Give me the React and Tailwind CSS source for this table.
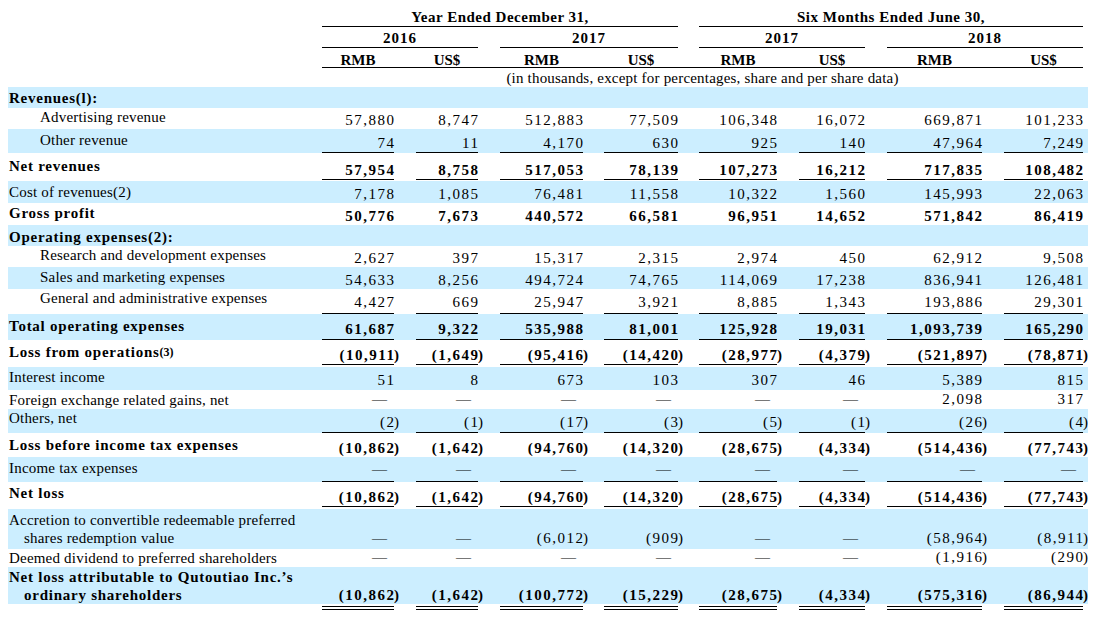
import { Fragment } from 'react';

const COLS =
  'grid grid-cols-[314px_72px_22px_62px_22px_83px_21px_74px_21px_78px_22px_66px_22px_95px_22px_79px_5px]';

const ROWS = [
  { label: 'Revenues(l):', b: true, bg: true, h: 'h-[21px]', lc: 'pl-[1px] pb-[1.5px]' },
  {
    label: 'Advertising revenue',
    h: 'h-[21px]',
    lc: 'pl-[32px] pb-[3.5px]',
    nc: 'pb-0',
    pc: 'pb-0',
    v: ['57,880', '8,747', '512,883', '77,509', '106,348', '16,072', '669,871', '101,233'],
  },
  {
    label: 'Other revenue',
    bg: true,
    h: 'h-[24px]',
    lc: 'pl-[32px] pb-[4.5px]',
    nc: 'pb-0 border-b border-black',
    pc: 'pb-[1px]',
    v: ['74', '11', '4,170', '630', '925', '140', '47,964', '7,249'],
  },
  {
    label: 'Net revenues',
    b: true,
    h: 'h-[28px]',
    lc: 'pl-[1px] pb-[6.5px]',
    nc: 'pb-[0.5px] border-b border-black mb-px',
    pc: 'pb-[2.5px]',
    v: ['57,954', '8,758', '517,053', '78,139', '107,273', '16,212', '717,835', '108,482'],
  },
  {
    label: 'Cost of revenues(2)',
    bg: true,
    h: 'h-[22px]',
    lc: 'pl-[1px] pb-[2.5px]',
    nc: 'pb-0',
    pc: 'pb-0',
    v: ['7,178', '1,085', '76,481', '11,558', '10,322', '1,560', '145,993', '22,063'],
  },
  {
    label: 'Gross profit',
    b: true,
    h: 'h-[22px]',
    lc: 'pl-[1px] pb-[3.5px]',
    nc: 'pb-0',
    pc: 'pb-0',
    v: ['50,776', '7,673', '440,572', '66,581', '96,951', '14,652', '571,842', '86,419'],
  },
  { label: 'Operating expenses(2):', b: true, bg: true, h: 'h-[21px]', lc: 'pl-[1px] pb-[0.5px]' },
  {
    label: 'Research and development expenses',
    h: 'h-[21px]',
    lc: 'pl-[32px] pb-[3.5px]',
    nc: 'pb-[0.5px]',
    pc: 'pb-[0.5px]',
    v: ['2,627', '397', '15,317', '2,315', '2,974', '450', '62,912', '9,508'],
  },
  {
    label: 'Sales and marketing expenses',
    bg: true,
    h: 'h-[22px]',
    lc: 'pl-[32px] pb-[3.5px]',
    nc: 'pb-[0.5px]',
    pc: 'pb-[0.5px]',
    v: ['54,633', '8,256', '494,724', '74,765', '114,069', '17,238', '836,941', '126,481'],
  },
  {
    label: 'General and administrative expenses',
    h: 'h-[25px]',
    lc: 'pl-[32px] pb-[7.5px]',
    nc: 'pb-[2.5px] border-b border-black',
    pc: 'pb-[3.5px]',
    v: ['4,427', '669', '25,947', '3,921', '8,885', '1,343', '193,886', '29,301'],
  },
  {
    label: 'Total operating expenses',
    b: true,
    bg: true,
    h: 'h-[26px]',
    lc: 'pl-[1px] pb-[5.5px]',
    nc: 'pb-[1.5px] border-b border-black',
    pc: 'pb-[2.5px]',
    v: ['61,687', '9,322', '535,988', '81,001', '125,928', '19,031', '1,093,739', '165,290'],
  },
  {
    label: (
      <>
        Loss from operations<span className="align-[4px] text-[12px] tracking-normal">(3)</span>
      </>
    ),
    b: true,
    h: 'h-[27px]',
    lc: 'pl-[1px] pb-[6.5px]',
    nc: 'pb-0 border-b border-black mb-[2px]',
    pc: 'pb-[3px]',
    v: ['(10,911)', '(1,649)', '(95,416)', '(14,420)', '(28,977)', '(4,379)', '(521,897)', '(78,871)'],
  },
  {
    label: 'Interest income',
    bg: true,
    h: 'h-[23px]',
    lc: 'pl-[1px] pb-[4.5px]',
    nc: 'pb-[1.5px]',
    pc: 'pb-[1.5px]',
    v: ['51', '8', '673', '103', '307', '46', '5,389', '815'],
  },
  {
    label: 'Foreign exchange related gains, net',
    h: 'h-[19px]',
    lc: 'pl-[1px] pb-[0.5px]',
    nc: 'pb-[1px]',
    pc: 'pb-[1px]',
    v: ['—', '—', '—', '—', '—', '—', '2,098', '317'],
  },
  {
    label: 'Others, net',
    bg: true,
    h: 'h-[24px]',
    lc: 'pl-[1px] pb-[6.5px]',
    nc: 'pb-[1.5px] border-b border-black',
    pc: 'pb-[2.5px]',
    v: ['(2)', '(1)', '(17)', '(3)', '(5)', '(1)', '(26)', '(4)'],
  },
  {
    label: 'Loss before income tax expenses',
    b: true,
    h: 'h-[24px]',
    lc: 'pl-[1px] pb-[3.5px]',
    nc: 'pb-0',
    pc: 'pb-0',
    v: ['(10,862)', '(1,642)', '(94,760)', '(14,320)', '(28,675)', '(4,334)', '(514,436)', '(77,743)'],
  },
  {
    label: 'Income tax expenses',
    bg: true,
    h: 'h-[25px]',
    lc: 'pl-[1px] pb-[5.5px]',
    nc: 'pb-[3.5px] border-b border-black',
    pc: 'pb-[4.5px]',
    v: ['—', '—', '—', '—', '—', '—', '—', '—'],
  },
  {
    label: 'Net loss',
    b: true,
    h: 'h-[27px]',
    lc: 'pl-[1px] pb-[7.5px]',
    nc: 'pb-[0.5px] border-b border-black mb-[2px]',
    pc: 'pb-[3.5px]',
    v: ['(10,862)', '(1,642)', '(94,760)', '(14,320)', '(28,675)', '(4,334)', '(514,436)', '(77,743)'],
  },
  {
    label: (
      <>
        <div>Accretion to convertible redeemable preferred</div>
        <div className="pl-[15px]">shares redemption value</div>
      </>
    ),
    bg: true,
    h: 'h-[40px]',
    lc: 'pl-[1px] pb-[2px] leading-[18px] flex-col !items-start justify-end',
    nc: 'pb-[2px]',
    pc: 'pb-[2px]',
    v: ['—', '—', '(6,012)', '(909)', '—', '—', '(58,964)', '(8,911)'],
  },
  {
    label: 'Deemed dividend to preferred shareholders',
    h: 'h-[18px]',
    lc: 'pl-[1px] pb-[0.5px]',
    nc: 'pb-[1px]',
    pc: 'pb-[1px]',
    v: ['—', '—', '—', '—', '—', '—', '(1,916)', '(290)'],
  },
  {
    label: (
      <>
        <div>Net loss attributable to Qutoutiao Inc.’s</div>
        <div className="pl-[15px]">ordinary shareholders</div>
      </>
    ),
    b: true,
    bg: true,
    h: 'h-[37px]',
    lc: 'pl-[1px] pb-0 leading-[18px] flex-col !items-start justify-end',
    nc: 'pb-0',
    pc: 'pb-0',
    v: ['(10,862)', '(1,642)', '(100,772)', '(15,229)', '(28,675)', '(4,334)', '(575,316)', '(86,944)'],
  },
];

function Values({ vals, bold, nc, pc }) {
  return vals.map((v, i) => {
    const neg = v.startsWith('(');
    const dash = v === '—';
    return (
      <Fragment key={i}>
        <div className={`flex items-end justify-end ${nc}`}>
          {dash ? (
            <span className="pr-[7px] font-normal">—</span>
          ) : (
            <span className={`-mr-[1.5px] tracking-[1.5px] ${bold ? 'font-bold' : ''}`}>
              {neg ? v.slice(0, -1) : v}
            </span>
          )}
        </div>
        <div className={`flex items-end ${pc}`}>
          {neg && <span className={bold ? 'font-bold' : ''}>)</span>}
        </div>
      </Fragment>
    );
  });
}

function Row({ row }) {
  return (
    <div className={`${COLS} ${row.h} ${row.bg ? 'bg-[#cceeff]' : ''}`}>
      <div
        className={`flex items-end whitespace-nowrap ${row.lc} ${
          row.b ? 'font-bold tracking-[0.75px]' : 'tracking-[0.2px]'
        }`}
      >
        {row.label}
      </div>
      {row.v ? (
        <Values vals={row.v} bold={row.b} nc={row.nc} pc={row.pc} />
      ) : null}
    </div>
  );
}

const SUBS = ['RMB', 'US$', 'RMB', 'US$', 'RMB', 'US$', 'RMB', 'US$'];

export default function App() {
  return (
    <div className="min-h-screen bg-white pl-[8px] font-['Liberation_Serif',serif] text-[15px] leading-[17px] text-black">
      <div className="w-[1080px]">
        {/* period headers */}
        <div className={`${COLS} h-[27px] font-bold tracking-[0.5px]`}>
          <div />
          <div className="col-span-7 flex items-end justify-center border-b border-black">
            Year Ended December 31,
          </div>
          <div />
          <div className="col-span-7 flex items-end justify-center border-b border-black">
            Six Months Ended June 30,
          </div>
          <div />
        </div>
        <div className={`${COLS} h-[21px] font-bold tracking-[1px]`}>
          <div />
          <div className="col-span-3 flex items-end justify-center border-b border-black">2016</div>
          <div />
          <div className="col-span-3 flex items-end justify-center border-b border-black">2017</div>
          <div />
          <div className="col-span-3 flex items-end justify-center border-b border-black">2017</div>
          <div />
          <div className="col-span-3 flex items-end justify-center border-b border-black">2018</div>
          <div />
        </div>
        <div className={`${COLS} h-[20px] font-bold leading-[14px]`}>
          <div />
          {SUBS.map((s, i) => (
            <Fragment key={i}>
              <div className="flex items-end justify-center border-b border-black">{s}</div>
              {i < 7 ? <div className="border-b border-black" /> : <div />}
            </Fragment>
          ))}
        </div>
        <div className={`${COLS} h-[19px] tracking-[0.2px]`}>
          <div />
          <div className="col-span-15 flex items-end justify-center pb-[0.5px]">
            (in thousands, except for percentages, share and per share data)
          </div>
          <div />
        </div>

        {ROWS.map((r, i) => (
          <Row key={i} row={r} />
        ))}

        {/* double rule under the last line */}
        <div className={`${COLS} h-[6px]`}>
          <div />
          {SUBS.map((_, i) => (
            <Fragment key={i}>
              <div className="mt-[2px] h-[4px] border-y border-black" />
              <div />
            </Fragment>
          ))}
        </div>
      </div>
    </div>
  );
}
